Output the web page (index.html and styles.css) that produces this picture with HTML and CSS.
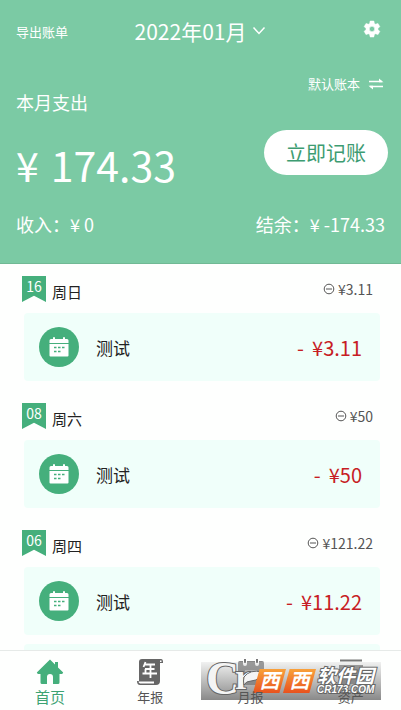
FILE: index.html
```html
<!DOCTYPE html>
<html lang="zh-CN">
<head>
<meta charset="utf-8">
<meta name="viewport" content="width=device-width, initial-scale=1">
<title>记账</title>
<link rel="stylesheet" href="styles.css">
</head>
<body>
<svg class="defs" aria-hidden="true">
  <symbol id="calendar" viewBox="0 0 20 20">
    <path d="M0.500 3.500Q.5 2 2 2H4V1q0-1 1-1t1 1v1h8V1q0-1 1-1t1 1v1h2q1.500 0 1.500 1.500V6H.5zM.5 7H19.500V18.500q0 1-1 1h-17q-1 0-1-1z" fill="#fff"/>
    <path d="M5 10.500h2.500M9 10.500h2.500M13 10.500h2.500M5 14.500h2.500M9 14.500h2.500" stroke="#45af7c" stroke-width="1.300"/>
  </symbol>
  <symbol id="minus" viewBox="0 0 12 12">
    <circle cx="6" cy="6" r="4.800" fill="none" stroke="#555" stroke-width="1"/><path d="M3 6h6" stroke="#555"/>
  </symbol>
</svg>
<div class="app">
  <header class="summary">
    <div class="topbar">
      <a class="export" href="#export">导出账单</a>
      <button class="month" type="button">2022年01月
        <svg class="chevron" viewBox="0 0 14 10"><path d="M1.500 1.500L7 7.500l5.500-6" fill="none" stroke="#fff" stroke-width="1.500"/></svg>
      </button>
      <button class="settings" type="button" aria-label="设置">
        <svg viewBox="0 0 24 24"><path fill="#fff" d="M19.140 12.940c.04-.3.06-.61.06-.94s-.02-.64-.07-.94l2.030-1.580a.49.49 0 0 0 .12-.61l-1.920-3.320a.49.49 0 0 0-.59-.22l-2.390.96a7 7 0 0 0-1.620-.94l-.36-2.540a.48.48 0 0 0-.48-.41h-3.840a.48.48 0 0 0-.47.41l-.36 2.540c-.59.24-1.130.57-1.620.94l-2.390-.96a.48.48 0 0 0-.59.22L2.740 8.870a.48.48 0 0 0 .12.61l2.030 1.580c-.05.3-.09.63-.09.94s.02.64.07.94l-2.030 1.580a.49.49 0 0 0-.12.61l1.920 3.320c.12.22.37.29.59.22l2.390-.96c.5.38 1.030.7 1.620.94l.36 2.540c.05.24.24.41.48.41h3.840c.24 0 .44-.17.47-.41l.36-2.540c.59-.24 1.130-.56 1.620-.94l2.390.96c.22.08.47 0 .59-.22l1.920-3.320a.48.48 0 0 0-.12-.61zM12 15.200A3.200 3.200 0 1 1 12 8.800a3.200 3.200 0 0 1 0 6.400z" stroke="#fff" stroke-width=".6"/></svg>
      </button>
    </div>
    <div class="overview">
      <div class="spent">
        <span class="caption">本月支出</span>
        <strong class="total"><span>¥</span><span>174.33</span></strong>
      </div>
      <div class="actions">
        <button class="book" type="button">默认账本
          <svg viewBox="0 0 16 12"><path d="M1 3.500h13M15 8.500H2" fill="none" stroke="#fff" stroke-width="1.400"/><path d="M11 .5L15.500 4.200H11zM5 11.500L.5 7.800H5z" fill="#fff"/></svg>
        </button>
        <button class="record" type="button">立即记账</button>
      </div>
    </div>
    <div class="balance"><span>收入：¥ 0</span><span>结余：¥ -174.33</span></div>
  </header>
  <main class="days">
    <section class="day">
      <div class="day-head"><span class="flag">16</span><h2>周日</h2><span class="sum"><svg><use href="#minus"/></svg>¥3.11</span></div>
      <div class="entry"><span class="badge"><svg><use href="#calendar"/></svg></span><span class="name">测试</span><span class="amount"><span>-</span><span>¥3.11</span></span></div>
    </section>
    <section class="day">
      <div class="day-head"><span class="flag">08</span><h2>周六</h2><span class="sum"><svg><use href="#minus"/></svg>¥50</span></div>
      <div class="entry"><span class="badge"><svg><use href="#calendar"/></svg></span><span class="name">测试</span><span class="amount"><span>-</span><span>¥50</span></span></div>
    </section>
    <section class="day">
      <div class="day-head"><span class="flag">06</span><h2>周四</h2><span class="sum"><svg><use href="#minus"/></svg>¥121.22</span></div>
      <div class="entry"><span class="badge"><svg><use href="#calendar"/></svg></span><span class="name">测试</span><span class="amount"><span>-</span><span>¥11.22</span></span></div>
      <div class="entry"><span class="badge"></span></div>
    </section>
  </main>
  <nav class="tabs">
    <a class="tab active" href="#home"><svg viewBox="0 0 28 28"><path d="M14 1.500L.8 14.500l1 1.500h2.700v8.500q0 1.500 1.500 1.500H11v-7q0-3 3-3t3 3v7h5q1.500 0 1.500-1.500V16h2.700l1-1.500L22 9.500V4h-3v2.500z" fill="#45af7c"/></svg><span>首页</span></a>
    <a class="tab" href="#year"><svg viewBox="0 0 28 28"><path d="M6 1H25q2 0 2 3v1h-3V23q0 4-4 4H4q-3 0-3-4h2V4q0-3 3-3z" fill="#666"/><path d="M2.500 23.500H18v2H4q-1.500-.5-1.500-2zM24 2.500h1.500v1.500H24z" fill="#fff"/><path d="M9.500 4L7.500 9M9 6.500h10M9 11h9.500M6.500 15.500H21M9.500 11v4M14.500 7v13" stroke="#fff" stroke-width="1.800" fill="none"/></svg><span>年报</span></a>
    <a class="tab" href="#month"><svg viewBox="0 0 28 28"><path d="M1 5q0-2 2-2h22q2 0 2 2v20q0 2-2 2H3q-2 0-2-2z" fill="#888"/><path d="M8 1v5M20 1v5" stroke="#fff" stroke-width="4" stroke-linecap="round"/><path d="M8 1v4M20 1v4" stroke="#777" stroke-width="2"/><path d="M8 13h12" stroke="#bbb" stroke-width="2"/></svg><span>月报</span></a>
    <a class="tab" href="#assets"><svg viewBox="0 0 28 28"><path d="M3 2.500h22" stroke="#777" stroke-width="2"/><path d="M2 7h24v19H2z" fill="#888"/></svg><span>资产</span></a>
    <div class="watermark">
      <svg class="wm-logo" viewBox="0 0 58 38">
        <text class="wm-c" x="5" y="32">C</text>
        <text class="wm-r" x="34" y="27">r</text>
        <path d="M43 15q6-8 18-5-1 8-11 9-5 0-7 4-1-4 0-8z" fill="#f4f4f4" stroke="#666"/>
      </svg>
      <span class="wm-tile">西</span><span class="wm-tile">西</span>
      <span class="wm-text"><b>软件园</b><i>CR173.COM</i></span>
    </div>
  </nav>
</div>
</body>
</html>
```
FILE: styles.css
```css
* { box-sizing: border-box; }
body { margin: 0; font-family: "Noto Sans CJK SC", sans-serif; background: #fefffe; color: #222; }
button { font: inherit; color: inherit; background: none; border: 0; padding: 0; display: flex; align-items: center; }
a { color: inherit; text-decoration: none; }
.defs { display: none; }
.app { height: 100vh; display: flex; flex-direction: column; overflow: hidden; }

.summary { flex: none; color: #fff; background: #7bcaa4; padding: 15px 16px 27px; border-bottom: 1px solid #70b994; }
.topbar { display: grid; grid-template-columns: 1fr auto 1fr; align-items: center; height: 32px; }
.export { font-size: 13px; }
.month { font-size: 21px; gap: 6px; }
.chevron { width: 14px; height: 10px; }
.settings { justify-self: end; padding: 0 3px 4px 0; }
.settings svg { width: 20px; height: 20px; }
.overview { display: flex; justify-content: space-between; padding-top: 25px; }
.spent { display: flex; flex-direction: column; padding-top: 16px; }
.caption { font-size: 18px; line-height: 28px; }
.total { display: flex; gap: 12px; font-size: 41px; line-height: 64px; font-weight: 400; margin-top: 16px; }
.actions { display: flex; flex-direction: column; align-items: flex-end; gap: 34px; margin-right: -3px; }
.book { font-size: 13px; line-height: 24px; gap: 8px; margin-right: 4px; }
.book svg { width: 16px; height: 12px; }
.record { color: #3d9c72; background: #fff; border-radius: 24px; font-size: 20px; height: 45px; padding: 0 22px; }
.balance { display: flex; justify-content: space-between; font-size: 18px; line-height: 24px; margin-top: 16px; }

.days { flex: 1; min-height: 0; overflow: hidden; padding: 12px 21px 0 22px; }
.day { margin-bottom: 21px; }
.day-head { display: flex; height: 37px; gap: 6px; align-items: flex-start; }
.flag { width: 24px; height: 26px; background: #45af7c; color: #fff; text-align: center; font-size: 14px; line-height: 20px; clip-path: polygon(0 0, 100% 0, 100% 100%, 50% 76%, 0 100%); }
h2 { margin: 0; font-size: 15px; font-weight: 400; line-height: 32px; }
.sum { margin-left: auto; padding-right: 7px; display: flex; align-items: center; gap: 3px; font-size: 14px; line-height: 26px; color: #555; }
.sum svg { width: 12px; height: 12px; }
.entry { display: flex; align-items: center; height: 68px; margin: 0 0 9px 2px; padding: 0 18px 0 15px; background: #f0fffa; border-radius: 4px; }
.day .entry:nth-child(2):last-child { margin-bottom: 22px; }
.day:not(:last-child) { margin-bottom: 0; }
.badge { width: 40px; height: 40px; border-radius: 50%; background: #45af7c; display: grid; place-items: center; }
.badge svg { width: 20px; height: 20px; }
.name { font-size: 17px; margin-left: 17px; }
.amount { display: flex; gap: 8px; margin-left: auto; font-size: 20px; color: #c71d24; }

.tabs { flex: none; position: relative; display: grid; grid-template-columns: repeat(4, 1fr); height: 60px; border-top: 1px solid #e6eae8; background: #fefffe; }
.tab { display: flex; flex-direction: column; align-items: center; padding-top: 7px; font-size: 13px; line-height: 22px; color: #555; }
.tab svg { width: 28px; height: 28px; }
.tab span { position: relative; z-index: 2; }
.active { font-size: 15px; color: #3da373; }

.watermark { position: absolute; right: 20px; bottom: 10px; width: 180px; height: 38px; display: flex; align-items: center; background: linear-gradient(#cccccc44, #777777dd); }
.wm-logo { width: 58px; height: 38px; margin-right: -6px; overflow: visible; }
.wm-c, .wm-r { font-family: "Liberation Serif", serif; font-weight: 700; fill: #f4f4f4; stroke: #666; stroke-width: 2px; paint-order: stroke; }
.wm-c { font-size: 46px; }
.wm-r { font-size: 36px; }
.wm-tile { width: 33px; height: 24px; margin-right: -3px; background: linear-gradient(#f9a13a, #e8521e); clip-path: polygon(20% 0, 100% 0, 80% 100%, 0 100%); color: #fff; font-size: 20px; font-weight: 700; font-style: italic; line-height: 22px; text-align: center; }
.wm-text { display: flex; flex-direction: column; margin-left: 4px; padding-bottom: 2px; color: #fff; -webkit-text-stroke: 2px #666; paint-order: stroke; }
.wm-text b { font-size: 19px; font-style: italic; line-height: 20px; }
.wm-text i { font-family: "Liberation Sans", sans-serif; font-size: 10px; font-weight: 700; line-height: 10px; }
```
